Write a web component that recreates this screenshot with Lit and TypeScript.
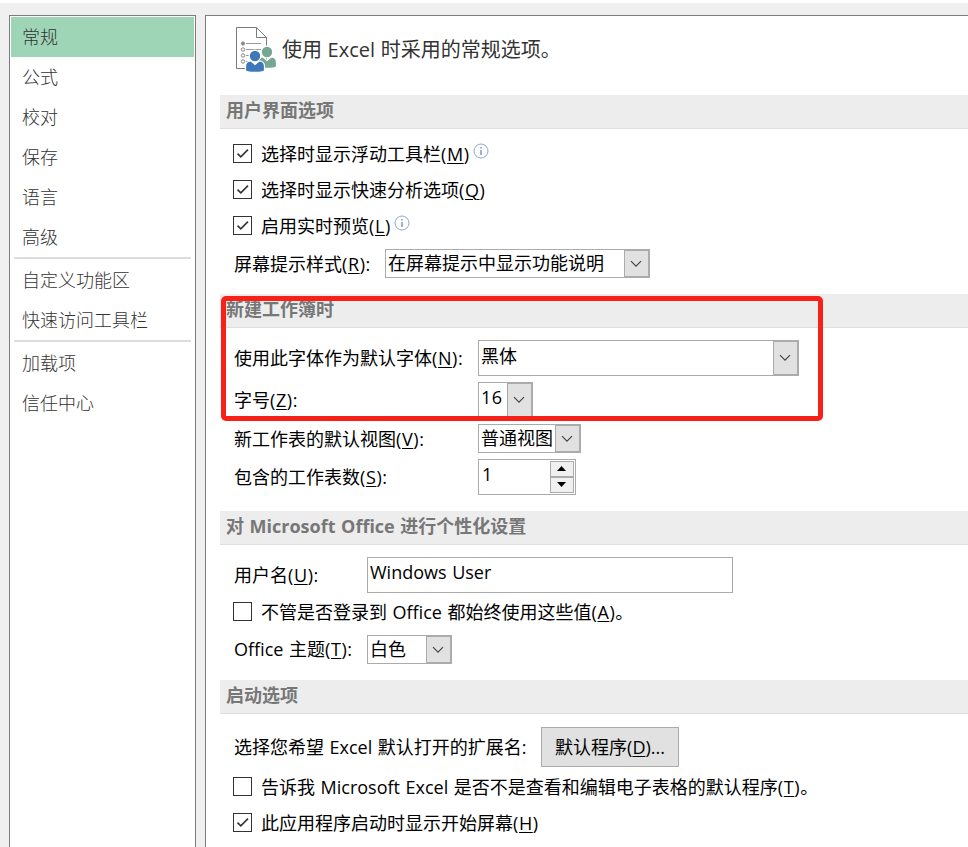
import { LitElement, html, css, svg, nothing } from "lit";
import { customElement, property } from "lit/decorators.js";

const key = (text: string, k: string, tail = ")") =>
  html`<span>${text}<span class="key">(<u>${k}</u>${tail}</span></span>`;

@customElement("opt-check")
class OptCheck extends LitElement {
  @property({ type: Boolean }) checked = false;
  @property({ type: Boolean }) info = false;
  static styles = css`
    :host { display: flex; align-items: center; height: 36px; padding-left: 13px; }
    .box { box-sizing: border-box; width: 19px; height: 19px; border: 1px solid #333; background: #fff; margin: 0 9px 2px 0; flex: none; }
    .box svg { display: block; width: 17px; height: 17px; }
    .info { width: 16px; height: 16px; margin: 0 0 6px 3px; flex: none; }
  `;
  render() {
    return html`<span class="box">${this.checked
        ? html`<svg viewBox="0 0 17 17"><path d="M3.5 8.6 L6.8 11.8 L14 4.6" fill="none" stroke="#333" stroke-width="1.6" /></svg>`
        : nothing}</span><slot></slot>${this.info
        ? html`<svg class="info" viewBox="0 0 16 16"><circle cx="8" cy="8" r="7" fill="#fff" stroke="#8fa8cf" /><path d="M8 7V12M8 4V5.5" stroke="#5b7fbd" stroke-width="1.2" /></svg>`
        : nothing}`;
  }
}

@customElement("opt-select")
class OptSelect extends LitElement {
  static styles = css`
    :host { display: flex; box-sizing: border-box; border: 1px solid #ababab; background: #fff; white-space: nowrap; flex: none; }
    .value { flex: 1; min-width: 0; padding-left: 2px; line-height: var(--value-line, 27px); }
    .drop { box-sizing: border-box; width: 25px; border: 1px solid #ababab; background: #e1e1e1; display: flex; align-items: center; justify-content: center; }
    svg { width: 12px; height: 8px; margin-right: 1px; }
  `;
  render() {
    return html`<span class="value"><slot></slot></span><span class="drop"><svg viewBox="0 0 12 8"><path d="M1 1.2 L6 6.2 L11 1.2" fill="none" stroke="#444" stroke-width="1.2" /></svg></span>`;
  }
}

@customElement("app-root")
class AppRoot extends LitElement {
  static styles = css`
    :host {
      display: block; height: 847px; overflow: hidden; box-sizing: border-box;
      font: 400 18px/24px "Open Sans", "Noto Sans CJK SC", sans-serif; color: #000;
      word-spacing: 0.9px;
      background: #f0f0f0; border-top: 3px solid #fff; white-space: nowrap;
    }
    .shell { display: flex; height: 850px; padding: 12px 0 0 9px; gap: 9px; }
    .nav { box-sizing: border-box; width: 187px; border: 1px solid #7d7d7d; background: #fff; padding: 1px; font-weight: 300; color: #333; }
    .item { height: 40px; line-height: 41px; padding-left: 11px; }
    .item.active { background: #9fd5b7; }
    .rule { height: 2px; background: #dcdcdc; margin: 0 3px 1px; }
    .pane { box-sizing: border-box; flex: 1; border: 1px solid #7d7d7d; border-right: 0; background: #fff; padding-left: 14px; position: relative; }
    .intro { display: flex; height: 79px; align-items: center; font-size: 20px; word-spacing: 0.4px; color: #333; box-sizing: border-box; padding: 0 0 12px 16px; gap: 5px; }
    .intro svg { width: 41px; height: 46px; }
    .head { height: 33px; line-height: 31px; background: #ededed; border-bottom: 1px solid #dfdfdf; padding-left: 6px; font-weight: 700; color: #777; }
    .group { box-sizing: border-box; }
    .g1 { height: 165px; padding-top: 7px; }
    .g2 { height: 183px; padding-top: 12px; }
    .g3 { height: 135px; padding-top: 12px; }
    .g4 { height: 133px; padding-top: 13px; }
    .row { display: flex; align-items: center; padding-left: 14px; }
    .row > span:first-child { flex: none; }
    .w244 > span:first-child { width: 244px; }
    .w133 > span:first-child { width: 133px; }
    .key { letter-spacing: 0.6px; }
    .tip { margin-top: 5px; }
    .tip > span:first-child { width: 151px; }
    .s-tip { width: 265px; height: 29px; }
    .s-font { width: 321px; height: 36px; --value-line: 30px; }
    .s-size { width: 55px; height: 36px; --value-line: 28px; letter-spacing: 0.4px; }
    .s-view { width: 103px; height: 29px; }
    .s-theme { width: 85px; height: 29px; }
    .gap { margin-top: 6px; }
    .spin { box-sizing: border-box; width: 98px; height: 36px; border: 1px solid #ababab; display: flex; padding: 1px 1px 1px 3px; line-height: 26px; }
    .num { flex: 1; }
    .steps { width: 24px; display: grid; grid-template-rows: 1fr 1fr; }
    .steps span { border: 1px solid #ababab; background: #f0f0f0; display: flex; align-items: center; justify-content: center; padding: 0 1px 1px 0; }
    .steps svg { width: 9px; height: 5px; }
    .input { box-sizing: border-box; width: 366px; height: 36px; border: 1px solid #ababab; padding-left: 2px; line-height: 28px; }
    .auth { margin-top: 1px; }
    .theme { margin-top: 5px; }
    .theme > span:first-child { margin-top: -1px; }
    .button { box-sizing: border-box; width: 138px; height: 40px; border: 1px solid #ababab; background: #e1e1e1; text-align: center; line-height: 38px; }
    .ext > span:first-child { width: 307px; }
    .ext { margin-bottom: 2px; }
    .frame { position: absolute; left: 15px; top: 280px; width: 602px; height: 125px; box-sizing: border-box; border: 5px solid #f8211a; border-radius: 5px; }
    u { text-decoration-thickness: 1px; text-underline-offset: 2px; }
  `;

  person(x: number, y: number, color: string) {
    return svg`<g transform="translate(${x} ${y})" stroke="#fff" stroke-width="1.2" fill=${color}><path d="M0 20V16C0 12 3 10.5 5.5 10.5L9.5 14L13.5 10.5C16 10.5 19 12 19 16V20C17 22.5 2 22.5 0 20Z" /><circle cx="9.5" cy="5.5" r="5.8" /></g>`;
  }

  render() {
    const item = (t: string, active = false) => html`<div class="item ${active ? "active" : ""}">${t}</div>`;
    return html`
      <div class="shell">
        <nav class="nav">
          ${item("常规", true)}${["公式", "校对", "保存", "语言", "高级"].map((t) => item(t))}
          <div class="rule"></div>
          ${item("自定义功能区")}${item("快速访问工具栏")}
          <div class="rule"></div>
          ${item("加载项")}${item("信任中心")}
        </nav>
        <main class="pane">
          <div class="intro">
            <svg viewBox="0 0 41 46">
              <path d="M0.5 0.5H20.5L30.5 10.5V41.5H0.5Z M20.5 0.5V10.5H30.5" fill="#fff" stroke="#7a7a7a" />
              <path d="M10 16.5H25M10 22.5H25M10 28.5H20M10 34.5H12" stroke="#999" />
              <g fill="#fff" stroke="#888"><circle cx="7" cy="16.5" r="1.6" fill="#888" /><circle cx="7" cy="22.5" r="1.7" /><circle cx="7" cy="28.5" r="1.7" /><circle cx="7" cy="34.5" r="1.7" /></g>
              ${this.person(21.5, 19.5, "#74a893")}${this.person(9.5, 23.5, "#3f78b8")}
            </svg>
            <span>使用 Excel 时采用的常规选项。</span>
          </div>
          <div class="head">用户界面选项</div>
          <div class="group g1">
            <opt-check checked info>${key("选择时显示浮动工具栏", "M")}</opt-check>
            <opt-check checked>${key("选择时显示快速分析选项", "Q")}</opt-check>
            <opt-check checked info>${key("启用实时预览", "L")}</opt-check>
            <div class="row tip">${key("屏幕提示样式", "R", "):")}<opt-select class="s-tip">在屏幕提示中显示功能说明</opt-select></div>
          </div>
          <div class="head">新建工作簿时</div>
          <div class="group g2">
            <div class="row w244">${key("使用此字体作为默认字体", "N", "):")}<opt-select class="s-font">黑体</opt-select></div>
            <div class="row w244 gap">${key("字号", "Z", "):")}<opt-select class="s-size">16</opt-select></div>
            <div class="row w244 gap">${key("新工作表的默认视图", "V", "):")}<opt-select class="s-view">普通视图</opt-select></div>
            <div class="row w244 gap">${key("包含的工作表数", "S", "):")}
              <div class="spin"><span class="num">1</span><div class="steps">
                <span><svg viewBox="0 0 9 5"><path d="M0 5L4.5 0L9 5Z" /></svg></span>
                <span><svg viewBox="0 0 9 5"><path d="M0 0L4.5 5L9 0Z" /></svg></span>
              </div></div>
            </div>
          </div>
          <div class="head">对 Microsoft Office 进行个性化设置</div>
          <div class="group g3">
            <div class="row w133">${key("用户名", "U", "):")}<div class="input">Windows User</div></div>
            <opt-check class="auth">${key("不管是否登录到 Office 都始终使用这些值", "A", ")。")}</opt-check>
            <div class="row w133 theme">${key("Office 主题", "T", "):")}<opt-select class="s-theme">白色</opt-select></div>
          </div>
          <div class="head">启动选项</div>
          <div class="group g4">
            <div class="row ext"><span>选择您希望 Excel 默认打开的扩展名:</span><div class="button">默认程序(<u>D</u>)...</div></div>
            <opt-check>${key("告诉我 Microsoft Excel 是否不是查看和编辑电子表格的默认程序", "T", ")。")}</opt-check>
            <opt-check checked>${key("此应用程序启动时显示开始屏幕", "H")}</opt-check>
          </div>
          <div class="frame"></div>
        </main>
      </div>`;
  }
}
